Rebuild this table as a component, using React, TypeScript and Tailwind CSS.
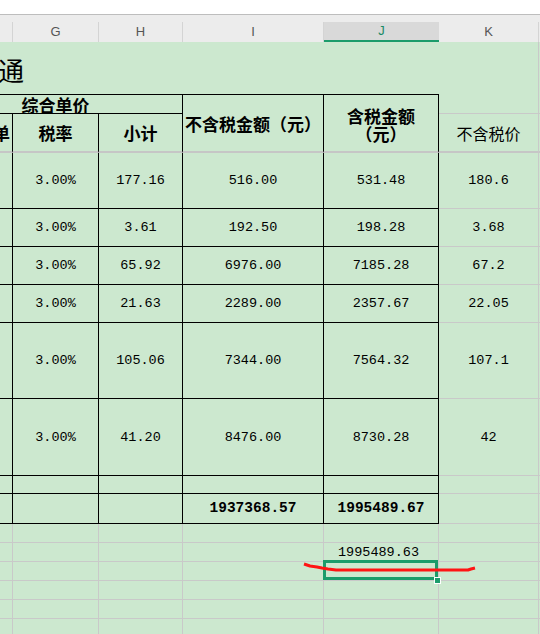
import React from "react";

const cjk = "font-['Noto_Sans_CJK_SC',sans-serif]";
const mono = "font-['Liberation_Mono',monospace]";

const blackCell = "border-r border-b border-black";
const grayCell = "border-r border-b border-[#c9c9c9]";

const rows = [
  ["3.00%", "177.16", "516.00", "531.48", "180.6"],
  ["3.00%", "3.61", "192.50", "198.28", "3.68"],
  ["3.00%", "65.92", "6976.00", "7185.28", "67.2"],
  ["3.00%", "21.63", "2289.00", "2357.67", "22.05"],
  ["3.00%", "105.06", "7344.00", "7564.32", "107.1"],
  ["3.00%", "41.20", "8476.00", "8730.28", "42"],
];

function Cell({ className = "", children }: { className?: string; children?: React.ReactNode }) {
  return <div className={"flex items-center justify-center overflow-hidden " + className}>{children}</div>;
}

function ColumnHeader() {
  return (
    <div className="grid grid-cols-[13px_86px_84px_141px_115px_100px_1fr] h-[20px] bg-[#ececec] text-[13px] text-[#555] font-['Liberation_Sans',sans-serif]">
      <Cell className="border-r border-[#d4d4d4]" />
      <Cell className="border-r border-[#d4d4d4]">G</Cell>
      <Cell className="border-r border-[#d4d4d4]">H</Cell>
      <Cell className="border-r border-[#d4d4d4]">I</Cell>
      <Cell className="bg-[#d9d9d9] border-b-2 border-[#1b9c6b] text-[#1b8a64]">J</Cell>
      <Cell className="border-r border-[#d4d4d4]">K</Cell>
      <Cell />
    </div>
  );
}

export default function App() {
  return (
    <div className="relative w-[540px] h-[634px] overflow-hidden bg-white">
      <div className="h-[14px] bg-white" />
      <div className="h-px bg-[#bdbdbd]" />
      <div className="h-[7px] bg-[#ececec]" />
      <ColumnHeader />

      <div className="grid grid-cols-[13px_86px_84px_141px_115px_100px_1fr] grid-rows-[53px_19px_39px_56px_38px_38px_38px_76px_77px_18px_30px_19px_19px_19px_19px_19px_19px] bg-[#cce8cf] text-black">
        {/* title row */}
        <div className={"col-span-5 border-b border-black flex items-center pt-[3px] overflow-hidden " + cjk}>
          <span className="-ml-[2px] text-[26px] leading-none">通</span>
        </div>
        <Cell className="border-r border-[#c9c9c9]" />
        <Cell />

        {/* header rows */}
        <Cell className={"col-span-3 pr-[71px] text-[17px] font-bold leading-none " + blackCell + " " + cjk}>综合单价</Cell>
        <Cell className={"row-span-2 border-r border-b-2 border-r-black border-b-[#c6c6c6] text-[17px] font-bold leading-none whitespace-nowrap " + cjk}>
          不含税金额（元）
        </Cell>
        <Cell className={"row-span-2 flex-col pt-[3px] border-r border-b-2 border-r-black border-b-[#c6c6c6] text-[17px] font-bold leading-[18px] " + cjk}>
          <span>含税金额</span>
          <span>（元）</span>
        </Cell>
        <Cell className={grayCell} />
        <Cell className="border-b border-[#c9c9c9]" />

        <Cell className={"justify-end border-r border-b-2 border-r-black border-b-[#c6c6c6] text-[17px] font-bold " + cjk}>
          <span className="mr-[2px] shrink-0">单</span>
        </Cell>
        <Cell className={"border-r border-b-2 border-r-black border-b-[#c6c6c6] text-[17px] font-bold " + cjk}>税率</Cell>
        <Cell className={"border-r border-b-2 border-r-black border-b-[#c6c6c6] text-[17px] font-bold " + cjk}>小计</Cell>
        <Cell className={"border-r border-b-2 border-r-[#c9c9c9] border-b-[#c6c6c6] text-[16px] " + cjk}>不含税价</Cell>
        <Cell className="border-b-2 border-[#c6c6c6]" />

        {/* data rows */}
        {rows.map((r, i) => (
          <React.Fragment key={i}>
            <Cell className={blackCell} />
            {r.slice(0, 4).map((v, j) => (
              <Cell key={j} className={"text-[13.5px] pt-[2px] " + mono + " " + blackCell}>
                {v}
              </Cell>
            ))}
            <Cell className={"text-[13.5px] pt-[2px] " + mono + " " + grayCell}>{r[4]}</Cell>
            <Cell className="border-b border-[#c9c9c9]" />
          </React.Fragment>
        ))}

        {/* empty row */}
        <Cell className={blackCell} />
        <Cell className={blackCell} />
        <Cell className={blackCell} />
        <Cell className={blackCell} />
        <Cell className={blackCell} />
        <Cell className={grayCell} />
        <Cell className="border-b border-[#c9c9c9]" />

        {/* totals */}
        <Cell className={blackCell} />
        <Cell className={blackCell} />
        <Cell className={blackCell} />
        <Cell className={"text-[14.5px] font-bold " + mono + " " + blackCell}>1937368.57</Cell>
        <Cell className={"text-[14.5px] font-bold " + mono + " " + blackCell}>1995489.67</Cell>
        <Cell className={grayCell} />
        <Cell className="border-b border-[#c9c9c9]" />

        {/* plain grid below the table */}
        {[0, 1, 2, 3, 4, 5].map((i) => (
          <React.Fragment key={"g" + i}>
            <Cell className={grayCell} />
            <Cell className={grayCell} />
            <Cell className={grayCell} />
            <Cell className={grayCell} />
            {i === 1 ? (
              <Cell className={"text-[13.5px] pt-[3px] pr-[5px] " + mono + " " + grayCell}>1995489.63</Cell>
            ) : i === 2 ? (
              <div className={"relative " + grayCell}>
                <div className="absolute -left-[1px] -top-[2px] right-0 bottom-0 border-[3px] border-[#1b9c6b]" />
                <div className="absolute -right-[3px] -bottom-[4px] w-[7px] h-[7px] bg-[#1b9c6b] border border-white" />
              </div>
            ) : (
              <Cell className={grayCell} />
            )}
            <Cell className={grayCell} />
            <Cell className="border-b border-[#c9c9c9]" />
          </React.Fragment>
        ))}
      </div>

      <svg className="absolute left-0 top-0 pointer-events-none" width="540" height="634">
        <polyline
          points="304,564 310,566 317,567 322,568 328,569 336,570 420,570 468,570 471,569 475,568"
          fill="none"
          stroke="#ff1414"
          strokeWidth="3"
          strokeLinejoin="round"
        />
      </svg>
    </div>
  );
}
